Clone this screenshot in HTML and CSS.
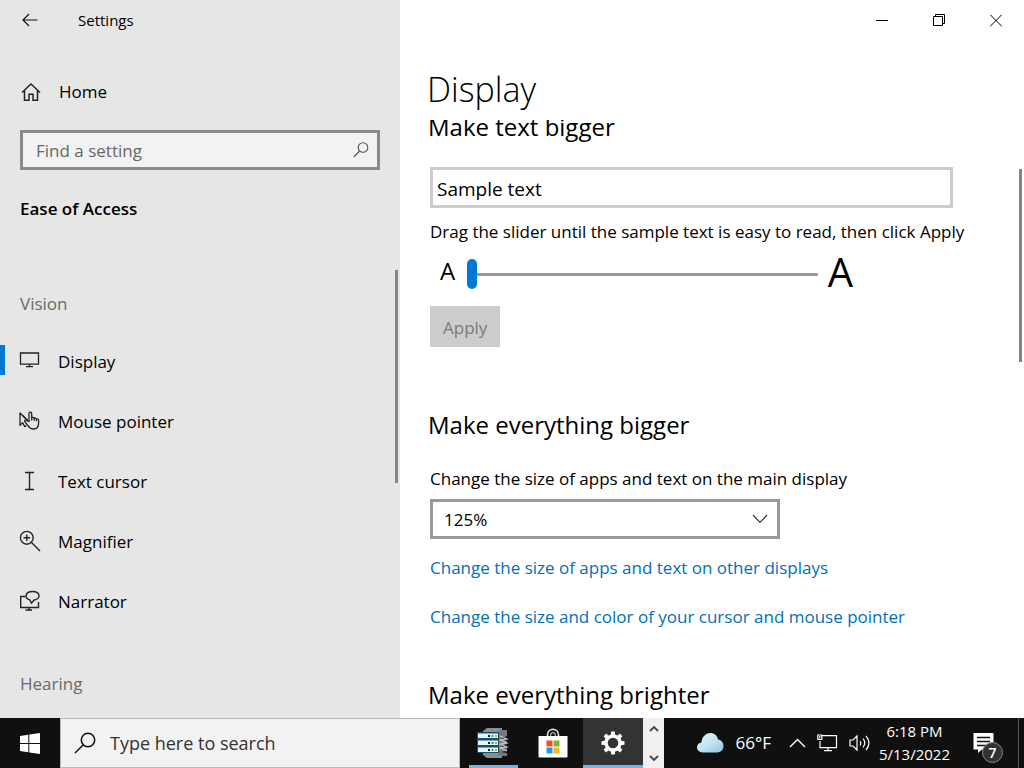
FILE: index.html
```html
<!DOCTYPE html>
<html lang="en">
<head>
<meta charset="utf-8">
<meta name="viewport" content="width=device-width, initial-scale=1">
<title>Settings</title>
<link rel="stylesheet" href="styles.css">
</head>
<body>
<div class="desktop">
  <div class="window">
    <aside class="sidebar">
      <header class="sidebar-title">
        <button class="icon-button back" aria-label="Back">
          <svg width="16" height="14" viewBox="0 0 16 14" fill="none" stroke="#111" stroke-width="1.2"><path d="M15.500 7H1M7 1 1 7l6 6"/></svg>
        </button>
        <span class="window-name">Settings</span>
      </header>
      <a class="home" href="#home">
        <svg width="20" height="20" viewBox="0 0 20 20" fill="none" stroke="#222" stroke-width="1.500"><path d="M1 10.500 10 2l9 8.500M3.500 8.500v9.700H8v-6h4v6h4.500V8.500"/></svg>
        <span>Home</span>
      </a>
      <div class="find">
        <input class="find-input" type="text" placeholder="Find a setting" aria-label="Find a setting">
        <svg class="find-icon" width="16" height="16" viewBox="0 0 16 16" fill="none" stroke="#555" stroke-width="1.100"><circle cx="10" cy="5.500" r="4.800"/><path d="M6.600 9 .8 15"/></svg>
      </div>
      <h2 class="category">Ease of Access</h2>
      <nav class="nav" aria-label="Ease of Access">
        <h3 class="nav-group">Vision</h3>
        <a class="nav-item current" href="#display" aria-current="page">
          <svg width="22" height="22" viewBox="0 0 22 22" fill="none" stroke="#222" stroke-width="1.300"><path d="M1.500 3h18v11.200h-18zM10.500 14.200v2.500M7 16.700h7"/></svg>
          <span>Display</span>
        </a>
        <a class="nav-item" href="#mouse">
          <svg width="22" height="22" viewBox="0 0 22 22" fill="none" stroke="#222" stroke-width="1.300" stroke-linejoin="round"><path d="M8.800 10.500 1 3v12.300l2.700-2.500 2 3.800 1.700-1"/><path d="M3.500 5.500 9 11" /><path d="M10 11.500V3.800c0-2.200 2.700-2.200 2.700 0V8c.4-1 2.300-.9 2.400.5.500-.9 2.200-.6 2.300.7.700-.7 2.200-.2 2.200 1.100v3c0 3.700-2 5.700-5.100 5.700-2.800 0-4.300-1.500-5.800-3.700l-3-3.800c-.5-1.200.7-1.800 1.700-1.200zM12.700 7.500v3M15.100 8.500v2.300M17.400 9.200v2"/></svg>
          <span>Mouse pointer</span>
        </a>
        <a class="nav-item" href="#cursor">
          <svg width="22" height="22" viewBox="0 0 22 22" fill="none" stroke="#222" stroke-width="1.400"><path d="M6 2.500h9M6 19.500h9M10.500 2.500v17"/></svg>
          <span>Text cursor</span>
        </a>
        <a class="nav-item" href="#magnifier">
          <svg width="22" height="22" viewBox="0 0 22 22" fill="none" stroke="#222" stroke-width="1.400"><circle cx="7.800" cy="7.800" r="6.400"/><path d="M12.500 12.500 21 21M7.800 4.500v6.600M4.500 7.800h6.600"/></svg>
          <span>Magnifier</span>
        </a>
        <a class="nav-item" href="#narrator">
          <svg width="22" height="22" viewBox="0 0 22 22" fill="none" stroke="#222" stroke-width="1.400"><path d="M6.500 6.500H1.700v11h17.800V12M10 17.500V20M6.500 20h6.500"/><path d="M10.500 9.700c-5.400-1.700-4.400-8.200 3-8.200 8.300 0 8.500 7.800 1.700 8.500L12.500 13z"/></svg>
          <span>Narrator</span>
        </a>
        <h3 class="nav-group">Hearing</h3>
      </nav>
      <div class="thumb sidebar-thumb"></div>
    </aside>

    <main class="content">
      <div class="caption-buttons">
        <button class="icon-button" aria-label="Minimize"><svg width="12" height="13" viewBox="0 0 12 13" stroke="#000"><path d="M0 6.500h12"/></svg></button>
        <button class="icon-button" aria-label="Restore"><svg width="12" height="13" viewBox="0 0 12 13" fill="none" stroke="#000"><path d="M.5 2.500h9v9h-9zM2.500 2.500v-2h9v9h-2"/></svg></button>
        <button class="icon-button" aria-label="Close"><svg width="12" height="13" viewBox="0 0 12 13" stroke="#000"><path d="m0 .500 12 12M12 .500l-12 12"/></svg></button>
      </div>
      <h1 class="page-title">Display</h1>
      <div class="scroller">
        <section class="section">
          <h2 class="heading">Make text bigger</h2>
          <input class="sample" type="text" value="Sample text" aria-label="Sample text" readonly>
          <label class="label" for="text-size">Drag the slider until the sample text is easy to read, then click Apply</label>
          <div class="slider-row">
            <span class="small-a">A</span>
            <input class="slider" id="text-size" type="range" min="100" max="225" value="100">
            <span class="large-a">A</span>
          </div>
          <button class="apply" disabled>Apply</button>
        </section>
        <section class="section">
          <h2 class="heading">Make everything bigger</h2>
          <label class="label scale-label" for="scale">Change the size of apps and text on the main display</label>
          <div class="select-wrap">
            <select class="select" id="scale"><option>100%</option><option selected>125%</option><option>150%</option></select>
            <svg class="select-icon" width="16" height="10" viewBox="0 0 16 10" fill="none" stroke="#333" stroke-width="1.100"><path d="m1 1 7 7.500L15 1"/></svg>
          </div>
          <a class="link" href="#other">Change the size of apps and text on other displays</a>
          <a class="link" href="#pointer">Change the size and color of your cursor and mouse pointer</a>
        </section>
        <section class="section">
          <h2 class="heading">Make everything brighter</h2>
        </section>
      </div>
      <div class="thumb content-thumb"></div>
    </main>
  </div>

  <footer class="taskbar">
    <button class="start" aria-label="Start">
      <svg width="20" height="21" viewBox="0 0 20 21" fill="#fff"><path d="M0 3 8.300 1.800v8.200H0zM9.300 1.600 20 0v10H9.300zM0 11h8.300v8.300L0 18.100zM9.300 11H20v10L9.300 19.400z"/></svg>
    </button>
    <label class="search">
      <svg width="22" height="22" viewBox="0 0 22 22" fill="none" stroke="#111" stroke-width="1.500"><circle cx="14" cy="8" r="6.700"/><path d="M9.300 12.800 1 21"/></svg>
      <input class="search-input" type="text" placeholder="Type here to search" aria-label="Type here to search">
    </label>
    <div class="tasks">
      <button class="task running" aria-label="Server Manager">
        <svg width="32" height="32" viewBox="0 0 32 32"><path d="M6 4 10 1h15v5h-6v20h6v5H10l-4-3z" fill="#8b8e90"/><path d="M22 3h8v6l-6 3 6 2v3l-6 2 6 2v3l-6 1 6 1v3h-8z" fill="#777"/><path d="m23 9 7 3-7 1 7 3-7 1 7 3-7 1 7 3" fill="none" stroke="#c4c4c4" stroke-width="1.300"/><path d="M0 5h22v7H0zM0 12h22v7H0zM0 19h22v7H0z" fill="#14506c"/><path d="M1 6.500h20v4.500H1zM1 13.500h20V18H1zM1 20.500h20V25H1z" fill="#e5f6fb"/><path d="M11 8h2v2h-2zM11 15h2v2h-2zM11 22h2v2h-2z" fill="#123"/><path d="M14.500 8h2v2h-2zM14.500 15h2v2h-2zM14.500 22h2v2h-2z" fill="#4b9d45"/><path d="M18 8h2v2h-2zM18 15h2v2h-2zM18 22h2v2h-2z" fill="#dba43b"/></svg>
      </button>
      <button class="task" aria-label="Microsoft Store">
        <svg width="30" height="30" viewBox="0 0 30 30"><path d="M9.500 9V7c0-7.500 11-7.500 11 0v2" fill="none" stroke="#ddd" stroke-width="1.700"/><path d="M12.500 8c0-4.500 5-4.500 5 0" fill="none" stroke="#aaa" stroke-width="1.200"/><path d="M.5 8h29v20.500q0 1-1 1h-27q-1 0-1-1z" fill="#fff"/><path d="M8.500 12.500h6v6h-6z" fill="#e8502b"/><path d="M15.500 12.500h6v6h-6z" fill="#7fb823"/><path d="M8.500 19.500h6v6h-6z" fill="#1c9de0"/><path d="M15.500 19.500h6v6h-6z" fill="#f8b526"/></svg>
      </button>
      <button class="task running active" aria-label="Settings">
        <svg width="24" height="24" viewBox="-12 -12 24 24"><circle r="7" fill="none" stroke="#fff" stroke-width="3.400"/><g fill="#fff"><path id="tooth" d="M-2.200-7.500-1.800-11.500H1.800L2.200-7.500z"/><use href="#tooth" transform="rotate(45)"/><use href="#tooth" transform="rotate(90)"/><use href="#tooth" transform="rotate(135)"/><use href="#tooth" transform="rotate(180)"/><use href="#tooth" transform="rotate(225)"/><use href="#tooth" transform="rotate(270)"/><use href="#tooth" transform="rotate(315)"/></g></svg>
      </button>
    </div>
    <div class="pager">
      <button class="page-button" aria-label="Scroll up"><svg width="10" height="8" viewBox="0 0 10 8" fill="none" stroke="#444" stroke-width="1.800"><path d="m1 6 4-4 4 4"/></svg></button>
      <button class="page-button" aria-label="Scroll down"><svg width="10" height="8" viewBox="0 0 10 8" fill="none" stroke="#444" stroke-width="1.800"><path d="m1 2 4 4 4-4"/></svg></button>
    </div>
    <div class="tray">
      <button class="weather">
        <svg width="27" height="20" viewBox="0 0 27 20"><defs><linearGradient id="cloud" x1="0" y1="0" x2="1" y2="1"><stop offset="0" stop-color="#e9f7fd"/><stop offset=".5" stop-color="#c3e4f4"/><stop offset="1" stop-color="#8fc4e4"/></linearGradient></defs><path d="M6 19.500c-7.500 0-8-9-1.500-10C5-1.500 19-3.500 21 6.500c7.500 1 7.500 13-1 13z" fill="url(#cloud)"/></svg>
        <span>66°F</span>
      </button>
      <div class="tray-icons">
        <button class="icon-button" aria-label="Show hidden icons"><svg width="17" height="10" viewBox="0 0 17 10" fill="none" stroke="#fff" stroke-width="1.400"><path d="m1 9 7.500-7.500L16 9"/></svg></button>
        <button class="icon-button" aria-label="Network"><svg width="21" height="18" viewBox="0 0 21 18" fill="none" stroke="#fff" stroke-width="1.200"><path d="M5 1.600h14.500v12H3V7M11 13.600v3M7 16.600h8M.8 1h4v4.500h-4zM2.800 2v2.500"/></svg></button>
        <button class="icon-button" aria-label="Volume"><svg width="22" height="18" viewBox="0 0 22 18" fill="none" stroke="#fff" stroke-width="1.200"><path d="M1 6h3l4-4v14l-4-4H1zM11 7q1.500 2 0 4.500M14 4.500q3.500 4.500 0 9M17 2q6 7 0 14"/></svg></button>
      </div>
      <button class="clock"><span>6:18 PM</span><span>5/13/2022</span></button>
      <button class="notifications" aria-label="7 notifications">
        <svg width="21" height="21" viewBox="0 0 21 21"><path d="M.5 0h20v16.500H9L5 20v-3.500H.5z" fill="#fff"/><path d="M4 4.500h13M4 8.500h13M4 12.500h9" stroke="#111" stroke-width="1.300"/></svg>
        <span class="badge">7</span>
      </button>
    </div>
    <div class="show-desktop"></div>
  </footer>
</div>
</body>
</html>
```
FILE: styles.css
```css
* { box-sizing: border-box; }

body {
  margin: 0;
  font-family: "Open Sans", "Noto Sans", sans-serif;
  font-size: 17px;
  line-height: 24px;
  color: #000;
}

button, input, select { font: inherit; color: inherit; border-radius: 0; }
button { padding: 0; border: 0; background: none; }
h1, h2, h3 { margin: 0; font-weight: 400; }
a { text-decoration: none; color: inherit; }
svg { display: block; flex: none; }

.desktop {
  display: grid;
  grid-template-rows: minmax(0, 1fr) auto;
  height: 100vh;
  overflow: hidden;
}

.window {
  display: grid;
  grid-template-columns: 400px minmax(0, 1fr);
  min-height: 0;
}

.icon-button { display: grid; place-items: center; }

/* Sidebar */
.sidebar {
  position: relative;
  background: #e6e6e6;
  overflow: hidden;
}
.sidebar-title { display: flex; align-items: center; height: 40px; }
.back { width: 60px; height: 40px; }
.window-name { margin-left: 18px; font-size: 15px; }
.home {
  display: flex;
  align-items: center;
  gap: 18px;
  margin-top: 22px;
  padding-left: 21px;
  height: 60px;
}
.find {
  display: flex;
  align-items: center;
  margin: 8px 20px 0;
  padding: 0 8px 0 13px;
  height: 40px;
  border: 3px solid #8a8a8a;
  background: #f2f2f2;
}
.find-input {
  flex: 1;
  min-width: 0;
  padding: 2px 0 0;
  border: 0;
  background: none;
}
.find-input::placeholder { color: #666; opacity: 1; }
.category {
  margin: 27px 20px 0;
  font-size: 17px;
  font-weight: 600;
}
.nav { padding-top: 31px; }
.nav-group {
  margin: 40px 20px 0;
  font-size: 17px;
  color: #6a6a6a;
}
.nav-group + .nav-item { margin-top: 16px; }
.nav-item {
  display: flex;
  align-items: center;
  gap: 17px;
  height: 60px;
  padding-left: 19px;
}
.nav-item svg { margin-bottom: 2px; }
.current {
  background: linear-gradient(#0078d7, #0078d7) left 0 top 13px / 5px 30px no-repeat;
}
.thumb { position: absolute; background: #858585; width: 3px; }
.sidebar-thumb { top: 270px; right: 2px; height: 213px; }

/* Content pane */
.content {
  position: relative;
  display: flex;
  flex-direction: column;
  min-height: 0;
  background: #fff;
}
.caption-buttons { display: flex; justify-content: flex-end; }
.caption-buttons .icon-button { width: 57px; height: 40px; }
.page-title {
  padding-left: 27px;
  margin-top: 24px;
  font-size: 34px;
  font-weight: 300;
  line-height: 50px;
}
.scroller {
  flex: 1;
  min-height: 0;
  margin-top: 6px;
  padding: 0 71px 0 30px;
  overflow: hidden;
}
.section {
  display: flex;
  flex-direction: column;
  align-items: flex-start;
}
.section:first-child { margin-top: -10px; }
.section + .section { margin-top: 61px; }
.section:last-child { margin-top: 49px; }
.heading { margin-left: -2px; font-size: 24px; line-height: 34px; }
.sample {
  width: 100%;
  height: 41px;
  margin-top: 23px;
  padding: 2px 4px 0;
  border: 3px solid #ccc;
  background: #fff;
  font-size: 19px;
}
.label { margin-top: 12px; white-space: nowrap; }
.slider-row {
  display: flex;
  align-items: center;
  width: 423px;
  max-width: 100%;
  height: 42px;
  margin-top: 8px;
  padding-left: 10px;
}
.small-a { width: 27px; padding-bottom: 4px; font-size: 24px; }
.large-a { margin-left: 10px; padding-bottom: 2px; font-size: 40px; }
.slider {
  flex: 1;
  min-width: 0;
  height: 30px;
  margin: 2px 0 0;
  appearance: none;
  background: linear-gradient(#999, #999) center / 100% 3px no-repeat;
}
.slider::-webkit-slider-thumb {
  appearance: none;
  width: 10px;
  height: 30px;
  border-radius: 5px;
  background: #0078d7;
}
.apply {
  height: 41px;
  margin-top: 12px;
  padding: 2px 13px 0;
  background: #ccc;
  color: #7a7a7a;
}
.scale-label { margin-top: 25px; }
.select-wrap {
  display: grid;
  align-items: center;
  width: 350px;
  max-width: 100%;
  margin: 8px 0 5px;
}
.select, .select-icon { grid-area: 1 / 1; }
.select {
  height: 40px;
  padding: 2px 11px 0;
  border: 3px solid #999;
  background: #fff;
  appearance: none;
}
.select-icon { justify-self: end; margin-right: 12px; pointer-events: none; }
.link { margin-top: 12px; color: #0070b8; white-space: nowrap; }
.link + .link { margin-top: 25px; }
.content-thumb { top: 169px; right: 2px; height: 193px; }

/* Taskbar */
.taskbar {
  display: flex;
  height: 50px;
  background: #101010;
  color: #fff;
}
.start { display: grid; place-items: center; width: 60px; }
.search {
  display: flex;
  align-items: center;
  gap: 14px;
  width: 400px;
  padding-left: 13px;
  border: 1px solid #bbb;
  background: #f2f2f2;
  color: #333;
}
.search-input {
  flex: 1;
  min-width: 0;
  padding: 0;
  border: 0;
  background: none;
  font-size: 18px;
}
.search-input::placeholder { color: #333; opacity: 1; }
.tasks { display: flex; padding-left: 3px; }
.task {
  display: grid;
  place-items: center;
  width: 60px;
}
.running { background: linear-gradient(#76b1e8, #76b1e8) center bottom / 49px 3px no-repeat; }
.active { background-color: #333; background-size: 100% 3px; }
.pager {
  display: flex;
  flex-direction: column;
  justify-content: space-between;
  width: 21px;
  background: #f0f0f0;
}
.page-button { display: grid; place-items: center; height: 21px; }
.tray { display: flex; flex: 1; align-items: center; justify-content: flex-end; }
.weather { display: flex; align-items: center; gap: 11px; }
.tray-icons { display: flex; align-items: center; gap: 11px; margin: 0 8px 0 18px; }
.clock {
  display: flex;
  flex-direction: column;
  align-items: center;
  font-size: 15px;
  line-height: 23px;
}
.notifications {
  position: relative;
  margin: 0 24px 0 23px;
}
.badge {
  position: absolute;
  left: 9px;
  top: 9px;
  width: 21px;
  height: 21px;
  border: 1px solid #888;
  border-radius: 50%;
  background: #333;
  font-size: 14px;
  font-weight: 600;
  line-height: 19px;
  text-align: center;
}
.show-desktop { width: 6px; border-left: 1px solid #555; }
```
